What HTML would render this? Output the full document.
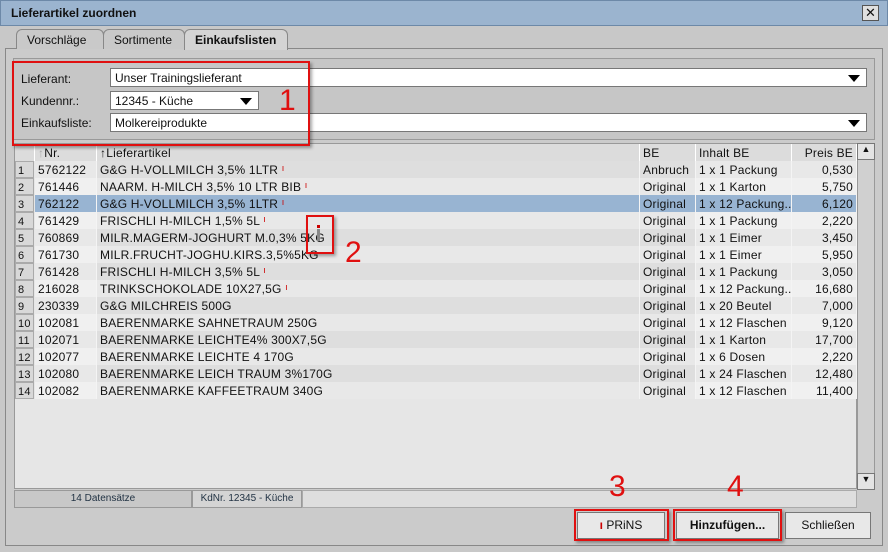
<!DOCTYPE html><html><head><meta charset="utf-8"><style>
*{margin:0;padding:0;box-sizing:border-box}
body{width:888px;height:552px;background:#c8c8c8;font-family:"Liberation Sans",sans-serif;font-size:12px;color:#111;position:relative;overflow:hidden}
.a{position:absolute}
.title{left:0;top:0;width:888px;height:26px;background:#9bb4cf;border:1px solid #6d89a8;font-weight:bold;padding:5px 10px;font-size:12px}
.close{left:862px;top:5px;width:17px;height:16px;background:#e0e0e0;border:1px solid #555;text-align:center;font-size:13px;line-height:13px}
.tab{top:29px;height:20px;border:1px solid #888;border-bottom:none;border-radius:6px 6px 0 0;background:#c9c9c9;padding:3px 10px;font-size:12px}
.panel{left:5px;top:48px;width:878px;height:498px;border:1px solid #888;background:#cbcbcb}
.inp{background:#fff;border:1px solid #777;height:19px;padding:2px 4px;font-size:12px}
.tri{position:absolute;right:6px;top:6px;width:0;height:0;border-left:6px solid transparent;border-right:6px solid transparent;border-top:7px solid #000}
.lab{font-size:12px}
.tbl{left:14px;top:143px;width:843px;height:346px;background:#e6e6e6;border:1px solid #999}
.row{position:absolute;left:0;height:17px;width:842px;font-size:12px;letter-spacing:0.2px}
.c{position:absolute;top:0;height:17px;padding:2px 3px;white-space:nowrap;overflow:hidden;border-right:1px solid #f4f4f4}
.rn{left:0;width:19px;background:#d8d8d8;border:1px solid #aaa;padding:3px 2px 0;font-size:11px}
.hd{background:#dcdcdc;border-right:1px solid #fff}
.mk{color:#c00;font-size:9px;vertical-align:top}
.red{border:2px solid #e01010;box-shadow:2px 2px 3px rgba(0,0,0,.35)}
.num{color:#e01010;font-size:30px}
.btn{top:512px;height:27px;background:#e8e8e8;border:1px solid #777;text-align:center;line-height:25px;font-size:12px}
</style></head><body>
<div class="a title">Lieferartikel zuordnen</div>
<div class="a close">✕</div>
<div class="a panel"></div>
<div class="a tab" style="left:16px;width:88px">Vorschläge</div>
<div class="a tab" style="left:103px;width:82px">Sortimente</div>
<div class="a tab" style="left:184px;width:104px;background:#d4d4d4;font-weight:bold;height:21px">Einkaufslisten</div>
<div class="a" style="left:13px;top:58px;width:862px;height:82px;border:1px solid #999;background:#c6c6c6"></div>
<div class="a lab" style="left:21px;top:72px">Lieferant:</div>
<div class="a lab" style="left:21px;top:94px">Kundennr.:</div>
<div class="a lab" style="left:21px;top:116px">Einkaufsliste:</div>
<div class="a inp" style="left:110px;top:68px;width:757px">Unser Trainingslieferant<span class="tri"></span></div>
<div class="a inp" style="left:110px;top:91px;width:149px">12345 - Küche<span class="tri"></span></div>
<div class="a inp" style="left:110px;top:113px;width:757px">Molkereiprodukte<span class="tri"></span></div>

<div class="a tbl">
<div class="row" style="top:0;background:#dcdcdc">
<div class="c hd" style="left:0;width:20px"></div>
<div class="c hd" style="left:20px;width:62px"><span style="color:#aaa">↑</span>Nr.</div>
<div class="c hd" style="left:82px;width:543px">↑Lieferartikel</div>
<div class="c hd" style="left:625px;width:56px">BE</div>
<div class="c hd" style="left:681px;width:96px">Inhalt BE</div>
<div class="c hd" style="left:777px;width:65px;text-align:right">Preis BE</div>
</div>
<div id="rows"></div>
</div>
<script>
var d=[["5762122","G&G H-VOLLMILCH 3,5% 1LTR",1,"Anbruch","1 x 1 Packung","0,530"],
["761446","NAARM. H-MILCH 3,5% 10 LTR BIB",1,"Original","1 x 1 Karton","5,750"],
["762122","G&G H-VOLLMILCH 3,5% 1LTR",1,"Original","1 x 12 Packung..","6,120"],
["761429","FRISCHLI H-MILCH 1,5% 5L",1,"Original","1 x 1 Packung","2,220"],
["760869","MILR.MAGERM-JOGHURT M.0,3% 5KG",0,"Original","1 x 1 Eimer","3,450"],
["761730","MILR.FRUCHT-JOGHU.KIRS.3,5%5KG",0,"Original","1 x 1 Eimer","5,950"],
["761428","FRISCHLI H-MILCH 3,5% 5L",1,"Original","1 x 1 Packung","3,050"],
["216028","TRINKSCHOKOLADE 10X27,5G",1,"Original","1 x 12 Packung..","16,680"],
["230339","G&G MILCHREIS 500G",0,"Original","1 x 20 Beutel","7,000"],
["102081","BAERENMARKE SAHNETRAUM 250G",0,"Original","1 x 12 Flaschen","9,120"],
["102071","BAERENMARKE LEICHTE4% 300X7,5G",0,"Original","1 x 1 Karton","17,700"],
["102077","BAERENMARKE LEICHTE 4 170G",0,"Original","1 x 6 Dosen","2,220"],
["102080","BAERENMARKE LEICH TRAUM 3%170G",0,"Original","1 x 24 Flaschen","12,480"],
["102082","BAERENMARKE KAFFEETRAUM 340G",0,"Original","1 x 12 Flaschen","11,400"]];
var h="";d.forEach(function(r,i){var sel=i==2,odd=i%2==0;
var a=sel?"#98b4d2":(odd?"#dedede":"#e8e8e8"),b=sel?"#98b4d2":(odd?"#e8e8e8":"#f0f0f0");
h+='<div class="row" style="top:'+(17+i*17)+'px">'+
'<div class="c rn">'+(i+1)+'</div>'+
'<div class="c" style="left:20px;width:62px;background:'+b+'">'+r[0]+'</div>'+
'<div class="c" style="left:82px;width:543px;background:'+a+'">'+r[1].replace(/&/g,"&amp;")+(r[2]?' <span class="mk">ı</span>':'')+'</div>'+
'<div class="c" style="left:625px;width:56px;background:'+a+'">'+r[3]+'</div>'+
'<div class="c" style="left:681px;width:96px;background:'+b+'">'+r[4]+'</div>'+
'<div class="c" style="left:777px;width:65px;text-align:right;background:'+b+'">'+r[5]+'</div></div>';});
document.getElementById("rows").innerHTML=h;
</script>
<div class="a" style="left:857px;top:143px;width:18px;height:346px;background:#d0d0d0;border:1px solid #999"></div>
<div class="a" style="left:857px;top:143px;width:18px;height:17px;background:#e4e4e4;border:1px solid #777;text-align:center;font-size:9px">▲</div>
<div class="a" style="left:857px;top:473px;width:18px;height:17px;background:#e4e4e4;border:1px solid #777;text-align:center;font-size:9px">▼</div>
<div class="a" style="left:14px;top:490px;width:178px;height:18px;background:#c8c8c8;border:1px solid #999;font-size:10px;color:#234;text-align:center;line-height:16px">14 Datensätze</div>
<div class="a" style="left:192px;top:490px;width:110px;height:18px;background:#d4d4d4;border:1px solid #999;font-size:10px;color:#234;text-align:center;line-height:16px">KdNr. 12345 - Küche</div>
<div class="a" style="left:302px;top:490px;width:555px;height:18px;background:#dedede;border:1px solid #aaa"></div>
<div class="a btn" style="left:577px;width:88px"><span style="color:#c00;font-weight:bold">ı</span> PRiNS</div>
<div class="a btn" style="left:676px;width:103px;font-weight:bold">Hinzufügen...</div>
<div class="a btn" style="left:785px;width:86px">Schließen</div>
<div class="a red" style="left:12px;top:61px;width:298px;height:85px"></div>
<div class="a red" style="left:306px;top:215px;width:28px;height:39px"></div>
<div class="a red" style="left:574px;top:509px;width:95px;height:32px"></div>
<div class="a red" style="left:673px;top:509px;width:109px;height:32px"></div>
<div class="a" style="left:317px;top:229px;width:3px;height:12px;background:#888"></div>
<div class="a" style="left:317px;top:225px;width:3px;height:3px;background:#c00"></div>
<div class="a num" style="left:279px;top:84px">1</div>
<div class="a num" style="left:345px;top:236px">2</div>
<div class="a num" style="left:609px;top:470px">3</div>
<div class="a num" style="left:727px;top:470px">4</div>
</body></html>
